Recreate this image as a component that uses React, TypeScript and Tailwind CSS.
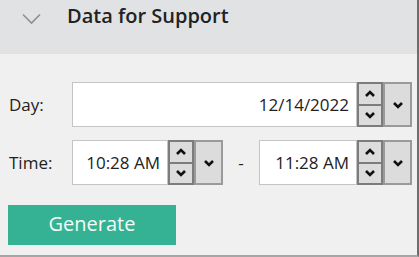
import React from "react";

const font = { fontFamily: '"Open Sans", "Noto Sans", sans-serif' };

function Up() {
  return (
    <svg width="12" height="8" viewBox="0 0 12 8">
      <path d="M2 6 L6 2 L10 6" fill="none" stroke="#111" strokeWidth="2.6" />
    </svg>
  );
}
function Down() {
  return (
    <svg width="12" height="8" viewBox="0 0 12 8">
      <path d="M2 2 L6 6 L10 2" fill="none" stroke="#111" strokeWidth="2.6" />
    </svg>
  );
}

function Picker({ value, width }: { value: string; width: string }) {
  return (
    <div className={`flex h-[45px] ${width}`}>
      <div className="flex flex-1 items-center justify-end border border-[#c4c4c4] bg-white pr-[7px] text-[17px] text-[#222]">
        {value}
      </div>
      <div className="flex w-[26px] flex-col">
        <div className="flex flex-1 items-center justify-center border-2 border-[#7c7c7c] bg-[#dcdcdc]">
          <Up />
        </div>
        <div className="-mt-[2px] flex flex-1 items-center justify-center border-2 border-[#7c7c7c] bg-[#dcdcdc]">
          <Down />
        </div>
      </div>
      <div className="flex w-[29px] items-center justify-center border-2 border-[#9a9a9a] bg-[#dcdcdc]">
        <Down />
      </div>
    </div>
  );
}

export default function App() {
  return (
    <div
      style={font}
      className="flex h-[257px] w-[419px] flex-col border-r-2 border-b-2 border-r-[#6e6e6e] border-b-[#a6a6a6] bg-[#eff0ef]"
    >
      <div className="flex h-[54px] items-start bg-[#e1e2e4]">
        <svg className="ml-[22px] mt-[13px]" width="19" height="12" viewBox="0 0 19 12">
          <path d="M1 1.5 L9.5 10 L18 1.5" fill="none" stroke="#8f8f8f" strokeWidth="1.6" />
        </svg>
        <span className="ml-[26px] mt-[1px] text-[20px] font-semibold leading-[30px] text-[#222]">
          Data for Support
        </span>
      </div>
      <div className="flex flex-col pl-[9px] pt-[28px]">
        <div className="flex items-center">
          <span className="w-[63px] text-[17px] text-[#222]">Day:</span>
          <Picker value="12/14/2022" width="w-[340px]" />
        </div>
        <div className="mt-[13px] flex items-center">
          <span className="w-[63px] text-[17px] text-[#222]">Time:</span>
          <Picker value="10:28 AM" width="w-[151px]" />
          <span className="w-[36px] text-center text-[17px] text-[#222]">-</span>
          <Picker value="11:28 AM" width="w-[153px]" />
        </div>
        <button className="mt-[20px] flex h-[40px] w-[168px] items-center justify-center bg-[#35b294] pb-[2px] text-[20px] font-medium text-[#f4fbf8] -ml-[1px]">
          Generate
        </button>
      </div>
    </div>
  );
}
